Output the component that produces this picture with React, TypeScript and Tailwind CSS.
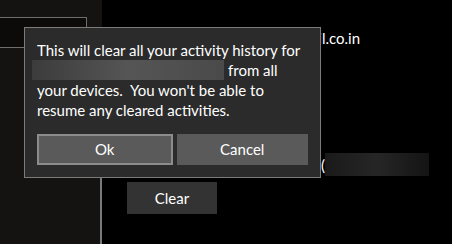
export default function App() {
  const font = { fontFamily: 'Lato, "Noto Sans", sans-serif' };
  return (
    <div className="relative flex h-[244px] w-[452px] overflow-hidden bg-black text-white" style={font}>
      {/* left nav panel */}
      <div className="flex w-[102px] shrink-0 flex-col bg-[#151311]">
        <div className="mt-[17px] h-[31px] w-[87px] border-y border-r border-[#6e6e6e] bg-[#0d0b0a]" />
        <div className="flex-1 border-r-2 border-[#7a7a7a] mt-[60px]" />
      </div>

      {/* content */}
      <div className="flex flex-1 flex-col pl-[25px]">
        <div className="mt-[27px] w-[233px] text-right text-[15px] leading-[22px]">mail.co.in</div>
        <div className="mt-[104px] flex h-[23px] items-center">
          <div className="w-[198px] text-right text-[15px] leading-[22px]">c(</div>
          <div className="h-[23px] w-[104px] bg-gradient-to-r from-[#1a1a1a] via-[#262626] to-[#141414]" />
        </div>
        <button className="mt-[6px] h-[32px] w-[90px] bg-[#333333] text-[15px]">Clear</button>
      </div>

      {/* confirmation flyout */}
      <div className="absolute left-[24px] top-[27px] w-[297px] border border-[#7b7b7b] bg-[#2b2b2b] px-[12px] pt-[12px] pb-[12px]">
        <div className="whitespace-nowrap text-[15px] leading-[20px]">
          <p>This will clear all your activity history for</p>
          <p className="flex">
            <span className="-ml-[5px] mr-[4px] h-[20px] w-[192px] bg-gradient-to-r from-[#3c3c3c] via-[#555555] to-[#4a4a4a]" />
            <span>from all</span>
          </p>
          <p>your devices.&nbsp; You won't be able to</p>
          <p>resume any cleared activities.</p>
        </div>
        <div className="mt-[14px] flex gap-[4px]">
          <button className="h-[31px] flex-1 border-2 border-[#8c8c8c] bg-[#5a5a5a] text-[15px]">Ok</button>
          <button className="h-[31px] flex-1 bg-[#5a5a5a] text-[15px]">Cancel</button>
        </div>
      </div>
    </div>
  );
}
